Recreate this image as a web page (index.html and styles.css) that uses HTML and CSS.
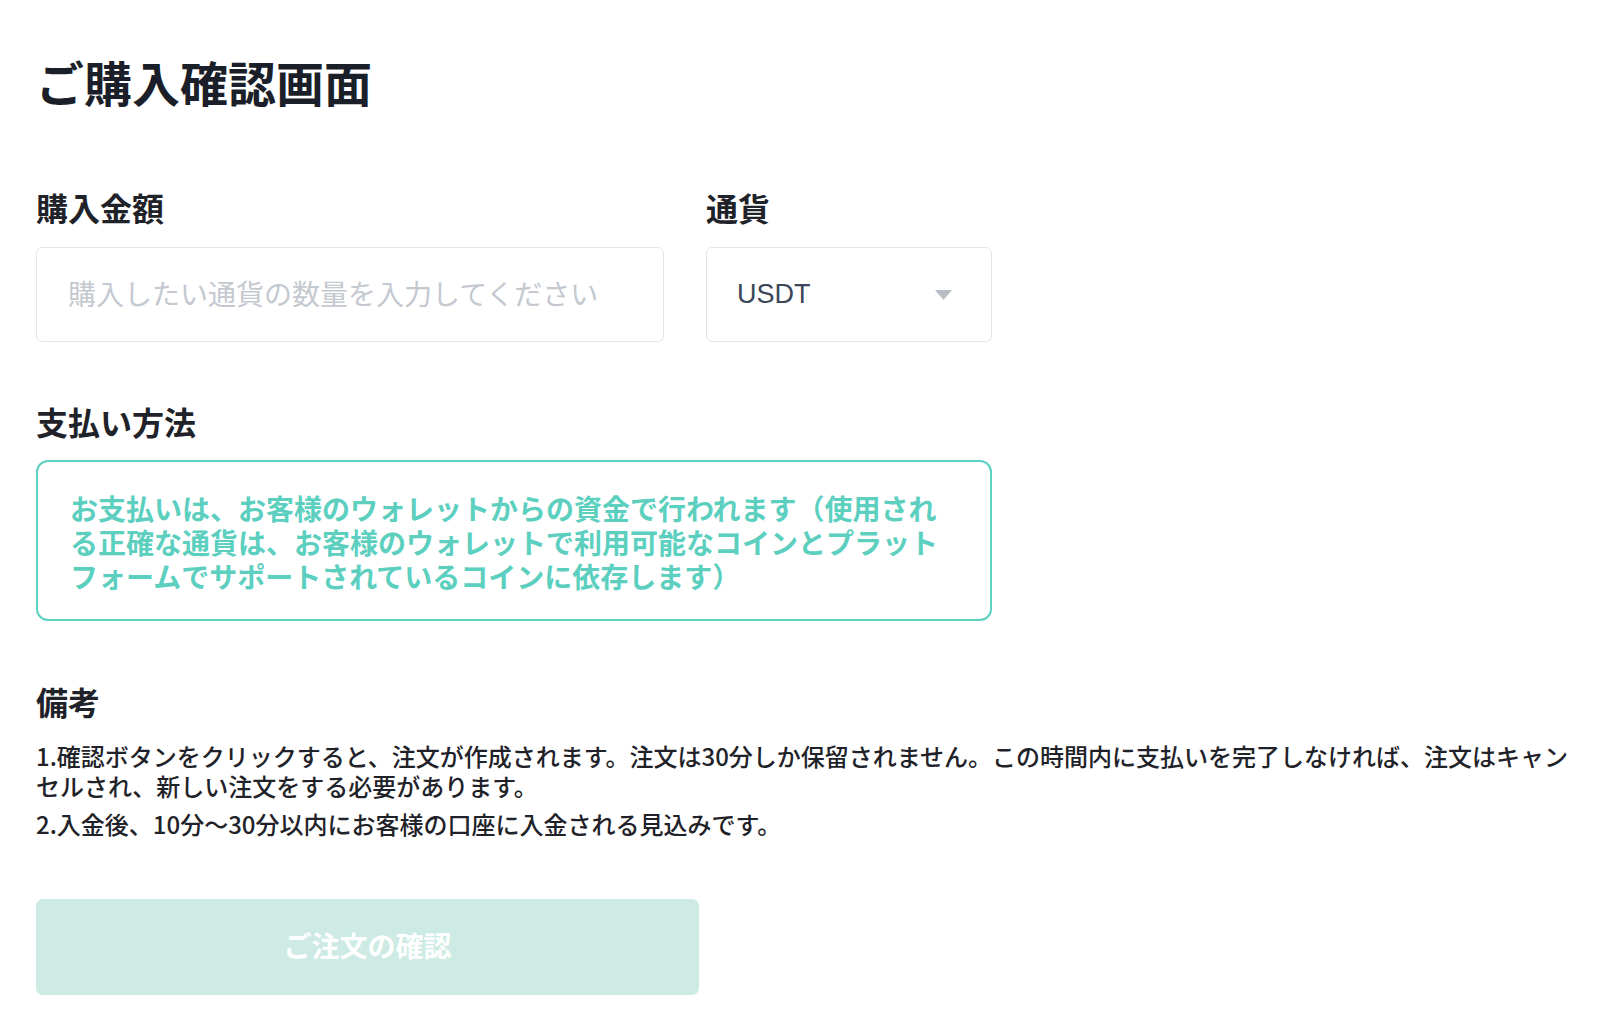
FILE: index.html
```html
<!DOCTYPE html>
<html lang="ja">
<head>
<meta charset="utf-8">
<title>ご購入確認画面</title>
<link rel="stylesheet" href="styles.css">
</head>
<body>
<main class="page">
  <h1 class="title">ご購入確認画面</h1>

  <div class="row">
    <div class="field field-amount">
      <label class="label" for="amount">購入金額</label>
      <input id="amount" class="input" type="text" placeholder="購入したい通貨の数量を入力してください">
    </div>
    <div class="field field-currency">
      <div class="label">通貨</div>
      <div class="select">
        <span class="select-value">USDT</span>
        <svg class="select-arrow" width="17" height="10" viewBox="0 0 17 10"><path d="M0 0 H17 L8.5 10 Z" fill="#b9bec6"/></svg>
      </div>
    </div>
  </div>

  <section class="block">
    <div class="label">支払い方法</div>
    <div class="pay-box">お支払いは、お客様のウォレットからの資金で行われます（使用される正確な通貨は、お客様のウォレットで利用可能なコインとプラットフォームでサポートされているコインに依存します）</div>
  </section>

  <section class="block">
    <div class="label">備考</div>
    <div class="notes">
      <p class="note">1.確認ボタンをクリックすると、注文が作成されます。注文は30分しか保留されません。この時間内に支払いを完了しなければ、注文はキャンセルされ、新しい注文をする必要があります。</p>
      <p class="note">2.入金後、10分～30分以内にお客様の口座に入金される見込みです。</p>
    </div>
  </section>

  <button class="submit" type="button">ご注文の確認</button>
</main>
</body>
</html>
```

FILE: styles.css
```css
* { box-sizing: border-box; }

html, body {
  margin: 0;
  padding: 0;
  background: #ffffff;
}

body {
  font-family: "Noto Sans CJK JP", "Noto Sans", sans-serif;
  color: #1f2329;
}

.page {
  padding: 53px 36px 0 36px;
}

.title {
  margin: 0;
  font-size: 48px;
  line-height: 56px;
  font-weight: 700;
  color: #1b1f29;
}

.row {
  display: flex;
  gap: 42px;
  margin-top: 78px;
  width: 956px;
}

.field {
  display: flex;
  flex-direction: column;
  gap: 20px;
}

.field-amount { width: 628px; }
.field-currency { width: 286px; }

.label {
  display: block;
  font-size: 32px;
  line-height: 40px;
  font-weight: 600;
  color: #1f2329;
}

.input {
  width: 100%;
  height: 95px;
  border: 1px solid #e2e5ea;
  border-radius: 6px;
  padding: 0 31px 4px 31px;
  font-family: "Noto Sans CJK JP", sans-serif;
  font-size: 28px;
  color: #3b4658;
  outline: none;
  background: #fff;
}

.input::placeholder {
  color: #c4c8cf;
  font-weight: 400;
}

.select {
  height: 95px;
  border: 1px solid #e2e5ea;
  border-radius: 6px;
  padding: 0 39px 0 30px;
  display: flex;
  align-items: center;
  justify-content: space-between;
}

.select-value {
  font-family: "Liberation Sans", Arial, sans-serif;
  font-size: 27px;
  color: #3b4658;
}

.select-arrow { display: block; }

.block {
  margin-top: 59px;
  width: 956px;
  display: flex;
  flex-direction: column;
  gap: 19px;
}

.block + .block {
  margin-top: 60px;
}

.pay-box {
  border: 2px solid #5ad2c0;
  border-radius: 12px;
  padding: 29px 32px 25px 32px;
  font-size: 28px;
  line-height: 34px;
  font-weight: 700;
  color: #5ccfbf;
  height: 161px;
}

.block .notes {
  width: 1540px;
  padding-top: 1px;
}

.note {
  margin: 0 0 8px 0;
  font-size: 24px;
  line-height: 30px;
  font-weight: 500;
  color: #1f2329;
}

.submit {
  display: block;
  margin-top: 52px;
  width: 663px;
  height: 96px;
  border: none;
  border-radius: 7px;
  padding: 0 0 4px 0;
  background: #cdebe4;
  color: #ffffff;
  font-family: "Noto Sans CJK JP", sans-serif;
  font-size: 28px;
  font-weight: 700;
  cursor: not-allowed;
}
```
